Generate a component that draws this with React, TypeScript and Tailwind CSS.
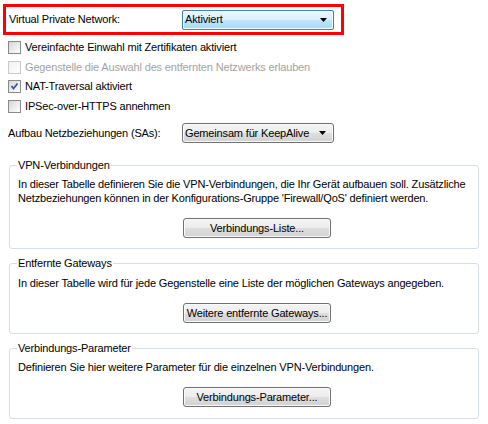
import React from "react";

const font = "font-['Liberation_Sans',Arial,sans-serif] text-[11px] tracking-[-0.16px] text-black";

function Arrow() {
  return (
    <svg width="7" height="4" viewBox="0 0 7 4" className="shrink-0">
      <polygon points="0,0 7,0 3.5,4" fill="#000" />
    </svg>
  );
}

function Checkbox({ checked, disabled }: { checked?: boolean; disabled?: boolean }) {
  return (
    <span
      className={
        disabled
          ? "relative w-[13px] h-[13px] shrink-0 border border-[#c9c9c9] bg-[linear-gradient(135deg,#f0f0f0,#ffffff)]"
          : "relative w-[13px] h-[13px] shrink-0 border border-[#8a8a8a] bg-[linear-gradient(135deg,#d6d6d6,#ffffff)]"
      }
    >
      {checked && (
        <svg width="11" height="11" viewBox="0 0 11 11" className="absolute left-0 top-0">
          <path d="M2.5 5 L4.5 7.5 L8.5 2.5" stroke="#3a56a8" strokeWidth="1.8" fill="none" />
        </svg>
      )}
    </span>
  );
}

function CheckRow({ label, checked, disabled, h }: { label: string; checked?: boolean; disabled?: boolean; h: string }) {
  return (
    <div className={`flex items-center gap-[4px] pl-[8px] ${h}`}>
      <Checkbox checked={checked} disabled={disabled} />
      <span className={disabled ? "text-[#a3a3a3]" : "text-black"}>{label}</span>
    </div>
  );
}

const btn =
  "h-[20px] w-[148px] flex items-center justify-center rounded-[3px] border border-[#707070] bg-[linear-gradient(to_bottom,#f4f4f4_0%,#ececec_50%,#dedede_51%,#d2d2d2_100%)] shadow-[inset_0_0_0_1px_#fbfbfb]";

export default function App() {
  return (
    <div className={`w-[488px] h-[424px] bg-white overflow-hidden ${font}`}>
      <div className="ml-[3px] mt-[4px] w-[341px] h-[31px] border-[3px] border-[#ff0000] flex items-center pl-[3px]">
        <span className="w-[173px] shrink-0">Virtual Private Network:</span>
        <div className="w-[152px] h-[20px] flex items-center justify-between pl-[2px] pr-[6px] rounded-[2px] border border-[#3c7fb1] bg-[linear-gradient(to_bottom,#eaf6fd_0%,#d9f0fc_50%,#bee6fd_51%,#a7d9f5_100%)] shadow-[inset_0_0_0_1px_#f4fbff]">
          <span>Aktiviert</span>
          <Arrow />
        </div>
      </div>

      <div className="mt-[3px]">
        <CheckRow h="h-[19px]" label="Vereinfachte Einwahl mit Zertifikaten aktiviert" />
        <CheckRow h="h-[20px]" label="Gegenstelle die Auswahl des entfernten Netzwerks erlauben" disabled />
        <CheckRow h="h-[19px]" label="NAT-Traversal aktiviert" checked />
        <CheckRow h="h-[20px]" label="IPSec-over-HTTPS annehmen" />
      </div>

      <div className="mt-[7px] flex items-center pl-[8px] h-[20px]">
        <span className="w-[174px] shrink-0">Aufbau Netzbeziehungen (SAs):</span>
        <div className="w-[152px] h-[20px] flex items-center justify-between pl-[2px] pr-[7px] rounded-[3px] border border-[#707070] bg-[linear-gradient(to_bottom,#f4f4f4_0%,#ececec_50%,#dedede_51%,#d2d2d2_100%)] shadow-[inset_0_0_0_1px_#fbfbfb]">
          <span>Gemeinsam für KeepAlive</span>
          <Arrow />
        </div>
      </div>

      <fieldset className="mt-[16px] ml-[9px] w-[470px] border border-[#d5dfe5] rounded-[3px] pl-[8px] pr-[4px] pt-[5px] pb-[10px]">
        <legend className="-ml-[1px] px-[1px] leading-[13px]">VPN-Verbindungen</legend>
        <p className="leading-[14px] whitespace-nowrap">
          In dieser Tabelle definieren Sie die VPN-Verbindungen, die Ihr Gerät aufbauen soll. Zusätzliche
          <br />
          Netzbeziehungen können in der Konfigurations-Gruppe 'Firewall/QoS' definiert werden.
        </p>
        <div className="mt-[13px] ml-[165px]">
          <div className={btn}>Verbindungs-Liste...</div>
        </div>
      </fieldset>

      <fieldset className="mt-[8px] ml-[9px] w-[470px] border border-[#d5dfe5] rounded-[3px] pl-[8px] pr-[4px] pt-[7px] pb-[10px]">
        <legend className="-ml-[1px] px-[1px] leading-[13px]">Entfernte Gateways</legend>
        <p className="leading-[13px] whitespace-nowrap">
          In dieser Tabelle wird für jede Gegenstelle eine Liste der möglichen Gateways angegeben.
        </p>
        <div className="mt-[13px] ml-[165px]">
          <div className={btn}>Weitere entfernte Gateways...</div>
        </div>
      </fieldset>

      <fieldset className="mt-[8px] ml-[9px] w-[470px] border border-[#d5dfe5] rounded-[3px] pl-[8px] pr-[4px] pt-[6px] pb-[11px]">
        <legend className="-ml-[1px] px-[1px] leading-[13px]">Verbindungs-Parameter</legend>
        <p className="leading-[13px] whitespace-nowrap">Definieren Sie hier weitere Parameter für die einzelnen VPN-Verbindungen.</p>
        <div className="mt-[13px] ml-[165px]">
          <div className={btn}>Verbindungs-Parameter...</div>
        </div>
      </fieldset>
    </div>
  );
}
